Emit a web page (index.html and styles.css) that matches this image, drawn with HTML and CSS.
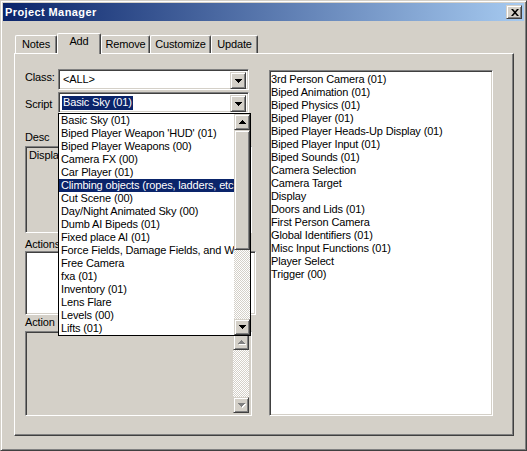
FILE: index.html
```html
<!DOCTYPE html>
<html>
<head>
<meta charset="utf-8">
<title>Project Manager</title>
<link rel="stylesheet" href="styles.css">
</head>
<body>

<div class="window">

	<!-- start:titlebar -->
	<div class="titlebar">
		<span class="title">Project Manager</span>
		<span class="close raised">
			<svg width="8" height="7" viewBox="0 0 8 7"><path d="M0 0h2l2 2.3L6 0h2L5 3.5 8 7H6L4 4.7 2 7H0l3-3.5z"/></svg>
		</span>
	</div>
	<!-- end:titlebar -->

	<div class="client">

		<div class="tabs">
			<div class="tab w-notes">Notes</div>
			<div class="tab w-add active">Add</div>
			<div class="tab w-remove">Remove</div>
			<div class="tab w-customize">Customize</div>
			<div class="tab w-update">Update</div>
		</div>

		<!-- start:panel -->
		<div class="panel">

			<div class="left">

				<div class="field-row">
					<label>Class:</label>
					<div class="combo sunken">
						<span class="value">&lt;ALL&gt;</span>
						<span class="drop-btn raised">
							<svg width="7" height="4" viewBox="0 0 7 4"><path d="M0 0h7v1H6v1H5v1H4v1H3V3H2V2H1V1H0z"/></svg>
						</span>
					</div>
				</div>

				<div class="field-row script-row">
					<label>Script</label>
					<div class="combo sunken">
						<span class="value"><span class="hilite">Basic Sky (01)</span></span>
						<span class="drop-btn raised">
							<svg width="7" height="4" viewBox="0 0 7 4"><path d="M0 0h7v1H6v1H5v1H4v1H3V3H2V2H1V1H0z"/></svg>
						</span>

						<!-- open drop-down of the Script combo -->
						<div class="droplist">
							<ul class="items">
								<li>Basic Sky (01)</li>
								<li>Biped Player Weapon 'HUD' (01)</li>
								<li>Biped Player Weapons (00)</li>
								<li>Camera FX (00)</li>
								<li>Car Player (01)</li>
								<li class="selected">Climbing objects (ropes, ladders, etc...)</li>
								<li>Cut Scene (00)</li>
								<li>Day/Night Animated Sky (00)</li>
								<li>Dumb AI Bipeds (01)</li>
								<li>Fixed place AI (01)</li>
								<li>Force Fields, Damage Fields, and Walls (01)</li>
								<li>Free Camera</li>
								<li>fxa (01)</li>
								<li>Inventory (01)</li>
								<li>Lens Flare</li>
								<li>Levels (00)</li>
								<li>Lifts (01)</li>
							</ul>
							<div class="vscroll">
								<span class="sb-btn raised">
									<svg width="7" height="4" viewBox="0 0 7 4"><path d="M3 0h1v1h1v1h1v1h1v1H0V3h1V2h1V1h1z"/></svg>
								</span>
								<span class="thumb raised"></span>
								<span class="track"></span>
								<span class="sb-btn raised">
									<svg width="7" height="4" viewBox="0 0 7 4"><path d="M0 0h7v1H6v1H5v1H4v1H3V3H2V2H1V1H0z"/></svg>
								</span>
							</div>
						</div>
					</div>
				</div>

				<div class="caption cap-desc">Desc</div>
				<div class="desc sunken">Display</div>

				<div class="caption cap-actions">Actions</div>
				<div class="actions sunken"></div>

				<div class="caption cap-action">Action</div>
				<div class="action sunken">
					<div class="vscroll">
						<span class="sb-btn raised">
							<svg class="off" width="8" height="5" viewBox="0 0 8 5"><path fill="#fff" d="M4 1h1v1h1v1h1v1h1v1H1V4h1V3h1V2h1z"/><path fill="#808080" d="M3 0h1v1h1v1h1v1h1v1H0V3h1V2h1V1h1z"/></svg>
						</span>
						<span class="track"></span>
						<span class="sb-btn raised">
							<svg class="off" width="8" height="5" viewBox="0 0 8 5"><path fill="#fff" d="M1 1h7v1H7v1H6v1H5v1H4V4H3V3H2V2H1z"/><path fill="#808080" d="M0 0h7v1H6v1H5v1H4v1H3V3H2V2H1V1H0z"/></svg>
						</span>
					</div>
				</div>

			</div>

			<ul class="scripts sunken">
				<li>3rd Person Camera (01)</li>
				<li>Biped Animation (01)</li>
				<li>Biped Physics (01)</li>
				<li>Biped Player (01)</li>
				<li>Biped Player Heads-Up Display (01)</li>
				<li>Biped Player Input (01)</li>
				<li>Biped Sounds (01)</li>
				<li>Camera Selection</li>
				<li>Camera Target</li>
				<li>Display</li>
				<li>Doors and Lids (01)</li>
				<li>First Person Camera</li>
				<li>Global Identifiers (01)</li>
				<li>Misc Input Functions (01)</li>
				<li>Player Select</li>
				<li>Trigger (00)</li>
			</ul>

		</div>
		<!-- end:panel -->

	</div>

</div>

</body>
</html>
```

FILE: styles.css
```css
* {box-sizing: border-box;}
body, ul, li {margin: 0; padding: 0;}
ul {list-style: none;}
body {background: #d4d0c8; color: #000; font: 11px/13px "Liberation Sans", Arial, sans-serif; letter-spacing: -0.15px;}
svg {display: block;}

/* ---------- 3D borders ---------- */
.raised {background: #d4d0c8; border: 1px solid; border-color: #d4d0c8 #404040 #404040 #d4d0c8; box-shadow: inset 1px 1px #fff, inset -1px -1px #808080;}
.sunken {border: 1px solid; border-color: #808080 #fff #fff #808080; box-shadow: inset 1px 1px #404040, inset -1px -1px #d4d0c8;}

/* ---------- window ---------- */
.window {width: 527px; height: 451px; border: 1px solid; border-color: #d4d0c8 #404040 #404040 #d4d0c8; box-shadow: inset 1px 1px #fff, inset -1px -1px #808080; padding: 2px; display: flex; flex-direction: column;}
.titlebar {height: 18px; flex: none; display: flex; align-items: center; padding: 0 2px; background: linear-gradient(to right, #0a246a, #a6caf0); color: #fff;}
.title {flex: 1; font-weight: bold; letter-spacing: 0.4px;}
.close {width: 16px; height: 14px; display: flex; align-items: center; justify-content: center; padding-left: 1px;}

.client {flex: 1; padding: 12px 10px 0 11px;}

/* ---------- tabs ---------- */
.tabs {height: 20px; display: flex; align-items: flex-end; padding-left: 1px;}
.tab {height: 18px; padding-top: 2px; text-align: center; border-top: 1px solid #fff; border-left: 1px solid #fff; border-right: 1px solid #404040; box-shadow: inset -1px 0 #808080; border-radius: 2px 2px 0 0;}
.tab.active {height: 21px; margin-bottom: -1px; position: relative; z-index: 2; background: #d4d0c8; padding-top: 1px;}
.w-notes {width: 42px;}
.w-add {width: 44px;}
.w-remove {width: 49px;}
.w-customize {width: 61px;}
.w-update {width: 47px;}

.panel {height: 383px; display: flex; padding: 15px 0 0 10px; border: 1px solid; border-color: #fff #404040 #404040 #fff; box-shadow: inset -1px -1px #808080;}

/* ---------- left column ---------- */
.left {width: 232px; display: flex; flex-direction: column;}
.field-row {display: flex; align-items: center; height: 21px;}
.field-row label {width: 33px; margin-top: -5px;}
.script-row {margin-top: 2px; position: relative; z-index: 5;}
.script-row label {margin-top: 3px;}

.combo {position: relative; width: 191px; height: 21px; padding: 2px; background: #fff; display: flex;}
.combo .value {flex: 1; display: flex; align-items: center; padding-left: 2px; white-space: nowrap;}
.hilite {background: #0a246a; color: #fff; padding: 0 1px 1px 1px; margin-left: -1px;}
.drop-btn {width: 16px; height: 17px; display: flex; align-items: center; justify-content: center; padding-top: 1px;}

.droplist {position: absolute; left: -1px; top: 20px; width: 193px; height: 223px; border: 1px solid #000; background: #fff; display: flex;}
.droplist .items {flex: 1; overflow: hidden;}
.droplist li, .scripts li {white-space: nowrap; overflow: hidden; padding-left: 2px;}
.droplist li.selected {background: #0a246a; color: #fff;}

.vscroll {width: 16px; display: flex; flex-direction: column;}
.sb-btn {height: 16px; flex: none; display: flex; align-items: center; justify-content: center;}
.sb-btn .off {margin-left: 1px;}
.thumb {height: 120px; flex: none;}
.track {flex: 1; background: repeating-conic-gradient(#fff 0 25%, #d4d0c8 0 50%) 0 0 / 2px 2px;}

.caption {height: 13px;}
.cap-desc {margin-top: 18px;}
.cap-actions {margin-top: 5px;}
.cap-action {margin-top: 1px;}

.desc {width: 227px; height: 87px; margin-top: 2px; padding: 2px 3px; white-space: nowrap; overflow: hidden;}
.actions {width: 231px; height: 64px; background: #fff;}
.action {width: 227px; height: 85px; margin-top: 2px; padding: 2px; display: flex; justify-content: flex-end;}

/* ---------- right list ---------- */
.scripts {width: 224px; height: 346px; margin: 1px 0 0 12px; padding: 2px 0 0 0; background: #fff;}
.scripts li {padding-left: 1px;}
```
